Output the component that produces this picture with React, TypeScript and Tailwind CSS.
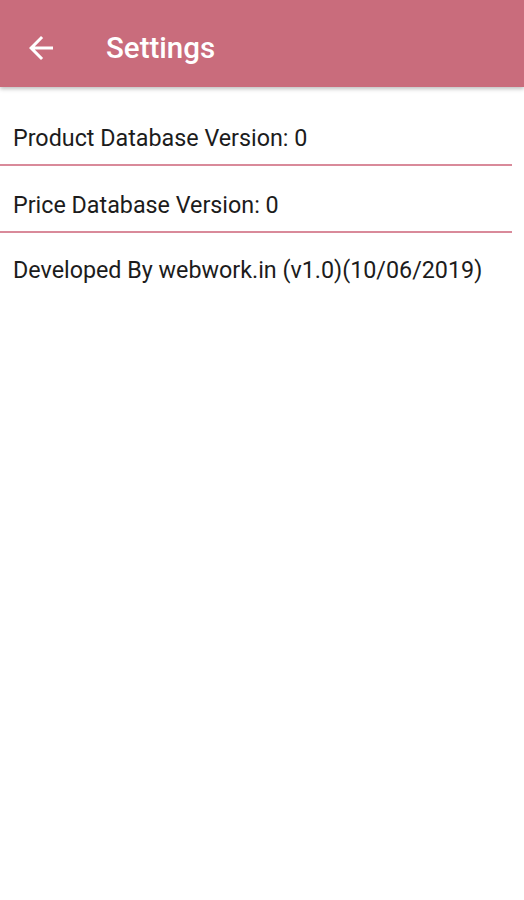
const rows = [
	"Product Database Version: 0",
	"Price Database Version: 0",
];

function BackArrow() {
	return (
		<svg viewBox="0 0 24 24" className="h-9 w-9" fill="currentColor" aria-hidden="true">
			<path d="M20 11H7.83l5.59-5.59L12 4l-8 8 8 8 1.41-1.41L7.83 13H20v-2z" />
		</svg>
	);
}

export default function App() {
	return (
		<div className="min-h-[900px] bg-white font-['Roboto',sans-serif]">
			<header className="flex h-[87px] items-center bg-[#c96c7c] pt-2 shadow-[0_2px_4px_rgba(0,0,0,0.25)]">
				<button type="button" className="ml-[23px] text-white">
					<BackArrow />
				</button>
				<h1 className="ml-[47px] font-medium text-[29.5px] text-white leading-9">Settings</h1>
			</header>

			<div className="pt-3">
				{rows.map((label) => (
					<div key={label} className="mr-3 border-[#d98a9a] border-b-2 pt-[26px] pb-[12px] pl-[13px]">
						<p className="text-[#1c1c1c] text-[23.3px] leading-[27px]">{label}</p>
					</div>
				))}
				<div className="pt-6 pl-[13px]">
					<p className="text-[#1c1c1c] text-[23.3px] leading-[27px]">
						Developed By webwork.in (v1.0)(10/06/2019)
					</p>
				</div>
			</div>
		</div>
	);
}
